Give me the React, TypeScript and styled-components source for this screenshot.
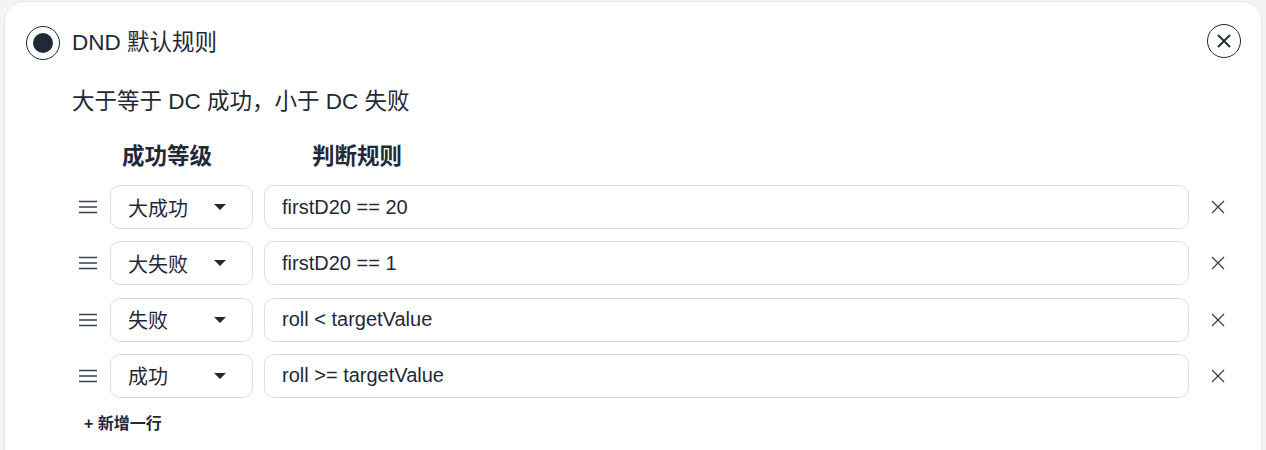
import React, { useState } from 'react';
import styled, { createGlobalStyle } from 'styled-components';

interface Rule {
    id: number
    level: string
    expr: string
}

const initialRules: Rule[] = [
    { id: 1, level: '大成功', expr: 'firstD20 == 20' },
    { id: 2, level: '大失败', expr: 'firstD20 == 1' },
    { id: 3, level: '失败', expr: 'roll < targetValue' },
    { id: 4, level: '成功', expr: 'roll >= targetValue' },
];

function App() {
    const [rules, setRules] = useState(initialRules);

    const removeRule = (id: number) => setRules(rules.filter(r => r.id !== id));
    const addRule = () =>
        setRules([...rules, { id: Date.now(), level: '成功', expr: '' }]);

    return (
        <>
            <GlobalStyle />
            <Card>
                <Header>
                    <Radio>
                        <RadioDot />
                    </Radio>
                    <Title>DND 默认规则</Title>
                    <CloseButton>
                        <svg width="14" height="14" viewBox="0 0 14 14">
                            <path d="M1.5 1.5L12.5 12.5M12.5 1.5L1.5 12.5" stroke="#1f2937" strokeWidth="1.8" strokeLinecap="round" />
                        </svg>
                    </CloseButton>
                </Header>
                <Body>
                    <Desc>大于等于 DC 成功，小于 DC 失败</Desc>
                    <ColumnHeads>
                        <ColumnHead $width={190}>成功等级</ColumnHead>
                        <ColumnHead>判断规则</ColumnHead>
                    </ColumnHeads>
                    <Rows>
                        {rules.map(rule => (
                            <Row key={rule.id}>
                                <Handle>
                                    <svg width="18" height="14" viewBox="0 0 18 14">
                                        <path d="M0 1.5H18M0 7H18M0 12.5H18" stroke="#374151" strokeWidth="1.4" />
                                    </svg>
                                </Handle>
                                <Select>
                                    <span>{rule.level}</span>
                                    <Caret />
                                </Select>
                                <Input defaultValue={rule.expr} />
                                <RemoveButton onClick={() => removeRule(rule.id)}>
                                    <svg width="14" height="14" viewBox="0 0 14 14">
                                        <path d="M1 1L13 13M13 1L1 13" stroke="#374151" strokeWidth="1.3" />
                                    </svg>
                                </RemoveButton>
                            </Row>
                        ))}
                    </Rows>
                    <AddRow onClick={addRule}>+ 新增一行</AddRow>
                </Body>
            </Card>
        </>
    )
}

const GlobalStyle = createGlobalStyle`
  body {
    margin: 0;
    background: #f3f4f6;
    font-family: "Liberation Sans", "Noto Sans CJK SC", sans-serif;
    color: #1f2937;
  }
`;

const Card = styled.div`
  margin: 1px 4px 0;
  height: 470px;
  background: #fff;
  border: 1px solid #e5e7eb;
  border-radius: 20px;
  padding: 24px 20px 0 21px;
  box-sizing: border-box;
`;

const Header = styled.div`
  display: flex;
  align-items: center;
  height: 34px;
`;

const Radio = styled.div`
  width: 34px;
  height: 34px;
  box-sizing: border-box;
  border: 1px solid #1f2937;
  border-radius: 50%;
  display: flex;
  align-items: center;
  justify-content: center;
  flex-shrink: 0;
`;

const RadioDot = styled.div`
  width: 20px;
  height: 20px;
  border-radius: 50%;
  background: #1f2937;
`;

const Title = styled.span`
  flex: 1;
  margin-left: 12px;
  font-size: 22.5px;
  line-height: 30px;
`;

const CloseButton = styled.div`
  width: 34px;
  height: 34px;
  box-sizing: border-box;
  border: 1px solid #1f2937;
  border-radius: 50%;
  display: flex;
  align-items: center;
  justify-content: center;
  margin-top: -4px;
  cursor: pointer;
`;

const Body = styled.div`
  padding-left: 46px;
`;

const Desc = styled.div`
  margin-top: 27px;
  font-size: 22.5px;
  line-height: 30px;
`;

const ColumnHeads = styled.div`
  display: flex;
  margin-top: 25px;
  padding-left: 50px;
`;

const ColumnHead = styled.div<{ $width?: number }>`
  width: ${p => (p.$width ? `${p.$width}px` : 'auto')};
  font-size: 22.5px;
  line-height: 30px;
  font-weight: 700;
`;

const Rows = styled.div`
  display: flex;
  flex-direction: column;
  gap: 12.3px;
  margin-top: 13px;
  margin-left: 4px;
  margin-right: 11px;
`;

const Row = styled.div`
  display: flex;
  align-items: center;
  height: 44px;
`;

const Handle = styled.div`
  width: 24px;
  display: flex;
  justify-content: center;
  margin-right: 10px;
  cursor: grab;
`;

const Select = styled.div`
  width: 143px;
  height: 44px;
  box-sizing: border-box;
  border: 1px solid #d9dce1;
  border-radius: 10px;
  padding: 0 26px 0 17px;
  display: flex;
  align-items: center;
  justify-content: space-between;
  font-size: 20px;
  color: #1f2937;
  cursor: pointer;
`;

const Caret = styled.span`
  width: 0;
  height: 0;
  border-left: 6px solid transparent;
  border-right: 6px solid transparent;
  border-top: 6px solid #1f2937;
`;

const Input = styled.input`
  flex: 1;
  margin-left: 11px;
  height: 44px;
  box-sizing: border-box;
  border: 1px solid #d9dce1;
  border-radius: 10px;
  padding: 0 17px;
  font-family: inherit;
  font-size: 20px;
  color: #1f2937;
  outline: none;
`;

const RemoveButton = styled.div`
  width: 24px;
  height: 24px;
  margin-left: 17px;
  display: flex;
  align-items: center;
  justify-content: center;
  cursor: pointer;
`;

const AddRow = styled.div`
  display: inline-block;
  margin-top: 14px;
  margin-left: 12px;
  font-size: 16px;
  line-height: 24px;
  font-weight: 700;
  cursor: pointer;
`;

export default App;
